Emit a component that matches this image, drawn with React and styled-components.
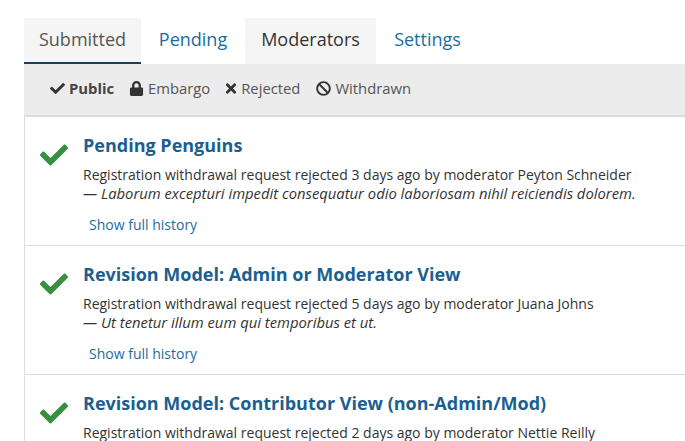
import React from "react";
import styled, { createGlobalStyle } from "styled-components";
import { FaCheck, FaLock, FaTimes, FaBan } from "react-icons/fa";

const GlobalStyle = createGlobalStyle`
    html, body {
        margin: 0;
        padding: 0;
        background: #fff;
        overflow: hidden;
    }
    body {
        font-family: "Open Sans", "Liberation Sans", sans-serif;
    }
`;

const Page = styled.div`
    width: 685px;
    height: 441px;
    overflow: hidden;
    box-sizing: border-box;
    padding: 18px 0 0 24px;
`;

const Tabs = styled.nav`
    display: flex;
    height: 46px;
`;

const Tab = styled.a`
    box-sizing: border-box;
    height: 46px;
    width: ${(p) => p.$width}px;
    padding-top: 9px;
    text-align: center;
    font-size: 18px;
    line-height: 25px;
    color: ${(p) => (p.$active ? "#555" : p.$hover ? "#333" : "#1b6d9f")};
    background: ${(p) => (p.$active || p.$hover ? "#f5f5f5" : "#fff")};
    border-bottom: ${(p) => (p.$active ? "2px solid #15415f" : "none")};
`;

const FilterBar = styled.div`
    box-sizing: border-box;
    height: 53px;
    display: flex;
    align-items: center;
    gap: 15px;
    padding: 0 0 3px 26px;
    background: #ececec;
    border-bottom: 2px solid #dcdcdc;
    font-size: 14.8px;
    color: #555;
`;

const Filter = styled.span`
    display: flex;
    align-items: center;
    gap: 4px;
    margin-left: ${(p) => p.$shift || 0}px;
    font-weight: ${(p) => (p.$active ? 700 : 400)};
    color: ${(p) => (p.$active ? "#444" : "#555")};
    svg {
        color: #333;
        font-size: 15px;
    }
`;

// the times glyph is narrower than its 1em box
const TimesIcon = styled(FaTimes)`
    width: 12px;
`;

const List = styled.ul`
    margin: 0;
    padding: 0;
    list-style: none;
    border-left: 1px solid #ddd;
`;

const Row = styled.li`
    box-sizing: border-box;
    height: 129px;
    display: flex;
    padding: 16px 0 0 15px;
    border-bottom: 1px solid #ddd;
`;

const Status = styled.div`
    width: 43px;
    flex: none;
    padding-top: 8px;
    color: #36903f;
    font-size: 28px;
    line-height: 0;
`;

const Body = styled.div`
    min-width: 0;
    white-space: nowrap;
`;

const Title = styled.h4`
    margin: 0;
    font-size: 18px;
    line-height: 25px;
    font-weight: 700;
    color: #1b5f91;
`;

const Action = styled.div`
    margin-top: 7px;
    font-size: 14px;
    line-height: 19px;
    color: #333;
`;

const Comment = styled.div`
    font-size: 14.8px;
    line-height: 19px;
    font-style: italic;
    color: #333;
`;

const HistoryLink = styled.a`
    display: block;
    margin: 12px 0 0 6px;
    font-size: 14px;
    line-height: 19px;
    color: #1b6d9f;
`;

const rows = [
    {
        title: "Pending Penguins",
        action: "Registration withdrawal request rejected 3 days ago by moderator Peyton Schneider",
        comment: "— Laborum excepturi impedit consequatur odio laboriosam nihil reiciendis dolorem.",
    },
    {
        title: "Revision Model: Admin or Moderator View",
        action: "Registration withdrawal request rejected 5 days ago by moderator Juana Johns",
        comment: "— Ut tenetur illum eum qui temporibus et ut.",
    },
    {
        title: "Revision Model: Contributor View (non-Admin/Mod)",
        action: "Registration withdrawal request rejected 2 days ago by moderator Nettie Reilly",
        comment: "",
    },
];

const App = () => {
    return (
        <Page>
            <GlobalStyle />
            <Tabs>
                <Tab $width={117} $active>Submitted</Tab>
                <Tab $width={104}>Pending</Tab>
                <Tab $width={131} $hover>Moderators</Tab>
                <Tab $width={103}>Settings</Tab>
            </Tabs>
            <FilterBar>
                <Filter $active><FaCheck />Public</Filter>
                <Filter><FaLock />Embargo</Filter>
                <Filter><TimesIcon />Rejected</Filter>
                <Filter $shift={1}><FaBan />Withdrawn</Filter>
            </FilterBar>
            <List>
                {rows.map((row) => (
                    <Row key={row.title}>
                        <Status><FaCheck /></Status>
                        <Body>
                            <Title>{row.title}</Title>
                            <Action>{row.action}</Action>
                            <Comment>{row.comment}</Comment>
                            <HistoryLink>Show full history</HistoryLink>
                        </Body>
                    </Row>
                ))}
            </List>
        </Page>
    );
};

export default App;
